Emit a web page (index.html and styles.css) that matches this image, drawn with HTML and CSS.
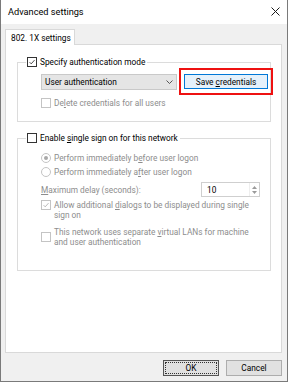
FILE: index.html
```html
<!doctype html>
<html lang="en">
<head>
<meta charset="utf-8">
<title>Advanced settings</title>
<link rel="stylesheet" href="styles.css">
</head>
<body>

<div class="window">
  <header class="titlebar">
    <span class="title">Advanced settings</span>
    <svg class="close" width="9" height="9" viewBox="0 0 9 9"><path d="M0.5 0.5L8.5 8.5M8.5 0.5L0.5 8.5" stroke="#1a1a1a" stroke-width="1"/></svg>
  </header>

  <div class="client">
    <div class="tabs"><div class="tab">802. 1X settings</div></div>

    <div class="panel">
      <!-- authentication group -->
      <fieldset class="group g-auth">
        <legend>
          <label class="check">
            <span class="box"><svg viewBox="0 0 10 10"><path d="M2 5.2L4 7.3L8.2 2.6" fill="none" stroke="#222" stroke-width="1"/></svg></span>
            <span>Specify authentication mode</span>
          </label>
        </legend>
        <div class="auth-row">
          <div class="select">
            <span>User authentication</span>
            <svg width="7" height="4" viewBox="0 0 7 4"><path d="M0.5 0.5L3.5 3.5L6.5 0.5" fill="none" stroke="#444" stroke-width="0.9"/></svg>
          </div>
          <div class="highlight"><button class="btn btn-focus"><span>Save <u>c</u>redentials</span></button></div>
        </div>
        <label class="check off row-delete">
          <span class="box"></span>
          <span>De<u>l</u>ete credentials for all users</span>
        </label>
      </fieldset>

      <!-- single sign on group -->
      <fieldset class="group g-sso">
        <legend>
          <label class="check">
            <span class="box"></span>
            <span>Enable <u>s</u>ingle sign on for this network</span>
          </label>
        </legend>
        <label class="check off radio-row">
          <span class="radio on"></span>
          <span>Perform immediately b<u>e</u>fore user logon</span>
        </label>
        <label class="check off radio-row">
          <span class="radio"></span>
          <span>Perform immediately a<u>f</u>ter user logon</span>
        </label>
        <div class="delay-row">
          <span class="muted"><u>M</u>aximum delay (seconds):</span>
          <div class="spin">
            <span>10</span>
            <div class="spin-btns">
              <svg width="5" height="3" viewBox="0 0 5 3"><path d="M0 3L2.5 0L5 3Z" fill="#9a9a9a"/></svg>
              <svg width="5" height="3" viewBox="0 0 5 3"><path d="M0 0L2.5 3L5 0Z" fill="#9a9a9a"/></svg>
            </div>
          </div>
        </div>
        <label class="check off multi top row-allow">
          <span class="box"><svg viewBox="0 0 10 10"><path d="M2 5.2L4 7.3L8.2 2.6" fill="none" stroke="#a8a8a8" stroke-width="1"/></svg></span>
          <span>Allow additional <u>d</u>ialogs to be displayed during single sign on</span>
        </label>
        <label class="check off multi row-vlan">
          <span class="box"></span>
          <span>This network uses separate <u>v</u>irtual LANs for machine and user authentication</span>
        </label>
      </fieldset>
    </div>

    <div class="actions">
      <button class="btn btn-default"><span>OK</span></button>
      <button class="btn">Cancel</button>
    </div>
  </div>
</div>

</body>
</html>
```

FILE: styles.css
```css
*{box-sizing:border-box;margin:0;padding:0}
body{
  font-family:Roboto,"Noto Sans",sans-serif;font-size:8.3px;line-height:10px;
  color:#000;background:#fff;
}
u{text-decoration:underline;text-underline-offset:1px}

.window{
  width:288px;height:382px;display:flex;flex-direction:column;
  border:1px solid #7a7a7a;border-top:none;background:#f0f0f0
}
.titlebar{
  height:24px;flex:none;background:#fff;display:flex;align-items:center;
  justify-content:space-between;padding:0 7px 0 7px
}
.title{font-size:9.2px}
.close{margin-top:-1px}

.client{flex:1;display:flex;flex-direction:column;padding:5px 5px 5px 4px}
.tabs{display:flex;height:16px;position:relative;z-index:1}
.tab{
  width:70px;height:16px;background:#fff;border:1px solid #d9d9d9;border-bottom:none;
  padding:3px 0 0 5px;white-space:nowrap
}
.panel{
  height:309px;background:#fff;border:1px solid #d9d9d9;margin-top:-1px;
  padding:0 10px 0 11px
}

/* group boxes */
.group{border:1px solid #dcdcdc;padding:0 0 0 8px;min-width:0}
.group legend{padding:0 2px 0 1px}
.g-auth{margin-top:12px;height:65px}
.g-sso{margin-top:11px;height:138px}

.check{display:flex;align-items:center;gap:3px;white-space:nowrap}
.check.multi{white-space:normal;width:211px}
.check.top{align-items:flex-start}
.box{
  flex:none;width:10px;height:10px;border:1px solid #333;background:#fff;
  display:flex
}
.box svg{width:8px;height:8px}
.radio{
  flex:none;width:10px;height:10px;border:1px solid #c4c4c4;border-radius:50%;
  display:flex;align-items:center;justify-content:center
}
.radio.on::after{content:"";width:4px;height:4px;border-radius:50%;background:#a8a8a8}
.off{color:#8d8d8d}
.off .box{border-color:#c4c4c4}
.muted{color:#8d8d8d}

/* auth row */
.auth-row{display:flex;align-items:center;margin:1px 0 0 15px;width:232px}
.select{
  flex:none;width:136px;height:16px;background:#e5e5e5;border:1px solid #c9c9c9;
  display:flex;align-items:center;justify-content:space-between;padding:0 3px 0 3px;
  margin-right:2px
}
.highlight{flex:none;width:94px;height:27px;border:2px solid #ee1111;padding:4px 3px}
.btn{
  font:inherit;color:#000;height:15px;width:100%;background:#e1e1e1;
  border:1px solid #adadad;display:flex;align-items:center;justify-content:center;
  white-space:nowrap
}
.btn-focus{background:#e5f1fb;border-color:#0078d7}
.row-delete{margin:3px 0 0 15px}

/* sso rows */
.radio-row{margin:10px 0 0 15px}
.radio-row + .radio-row{margin-top:4px}
.delay-row{
  display:flex;align-items:center;width:219px;margin:5px 0 0 15px
}
.spin{
  width:59px;height:15px;border:1px solid #cfcfcf;display:flex;margin-left:auto;
  align-items:center;justify-content:space-between;padding:0 1px 0 5px
}
.spin-btns{
  display:flex;flex-direction:column;gap:2px;align-items:center;
  width:9px;height:13px;justify-content:center;border-left:1px solid #eee
}
.row-allow{margin:3px 0 0 15px}
.row-vlan{margin:7px 0 0 15px}

/* dialog buttons */
.actions{display:flex;justify-content:flex-end;gap:7px;margin-top:7px}
.actions .btn{width:56px;height:16px}
.btn-default{border-color:#555;padding:1px}
.btn-default span{
  width:100%;height:100%;border:1px dotted #333;display:flex;align-items:center;
  justify-content:center
}
```
